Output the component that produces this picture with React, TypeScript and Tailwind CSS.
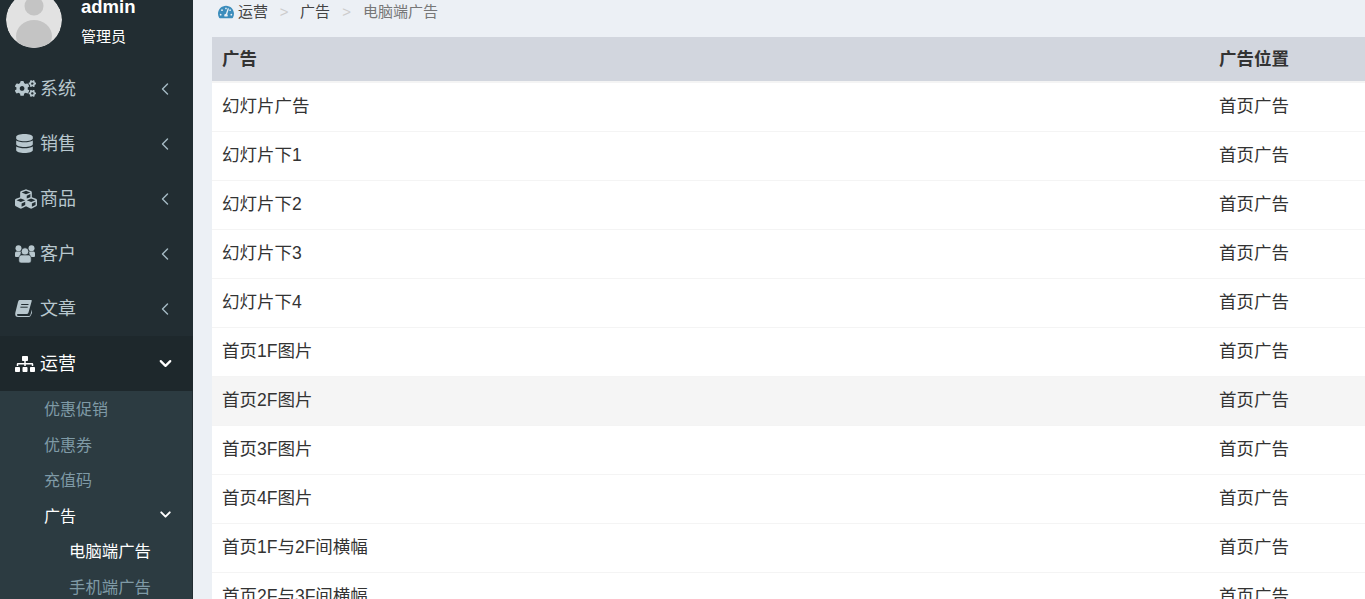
import { FaCogs, FaCubes, FaDatabase, FaSitemap, FaTachometerAlt } from 'react-icons/fa';
import { ChevronDown, ChevronLeft } from 'lucide-react';
import type { ReactNode } from 'react';

const font = "font-['Liberation_Sans','Noto_Sans_CJK_SC',sans-serif]";

const UsersIcon = () => (
  <svg viewBox="0 0 20 18" className="h-[18px] w-5" fill="currentColor">
    <circle cx="3.5" cy="3.2" r="3" />
    <circle cx="16.5" cy="3.2" r="3" />
    <path d="M0 8.5Q0 6 2 6.5H6L5 12H1Q0 12 0 11ZM20 8.5Q20 6 18 6.5H14L15 12H19Q20 12 20 11Z" />
    <circle cx="10" cy="6.5" r="3.8" stroke="#222d32" strokeWidth="0.8" />
    <path d="M3.8 13Q3.8 10 6.5 10H13.5Q16.2 10 16.2 13V16Q16.2 18 14 18H6Q3.8 18 3.8 16Z" stroke="#222d32" strokeWidth="0.6" />
  </svg>
);

const BookIcon = () => (
  <svg viewBox="0 0 17 17" className="h-[17px] w-[17px]">
    <path
      fill="currentColor"
      d="M4.5 0H16.5Q17 0.5 16.6 1.5L13.5 12.5Q13 14 11.5 14H3Q1.6 14 2 15.2Q2.3 16 3.5 16H14Q15 16 15.3 15L17 9.5V13L15.5 16Q15 17 13.5 17H3Q0 17 0.2 13.5Q0.3 12.5 1 10L3 2Q3.5 0 4.5 0Z"
    />
    <path stroke="#222d32" strokeWidth="1" d="M6.2 4.5H13.5M5.4 7.2H12.7" />
  </svg>
);

const menu: { label: string; icon: ReactNode; open?: boolean }[] = [
  { label: '系统', icon: <FaCogs size={21} /> },
  { label: '销售', icon: <FaDatabase size={19} /> },
  { label: '商品', icon: <FaCubes size={22} /> },
  { label: '客户', icon: <UsersIcon /> },
  { label: '文章', icon: <BookIcon /> },
  { label: '运营', icon: <FaSitemap size={20} />, open: true },
];

const rows = [
  '幻灯片广告',
  '幻灯片下1',
  '幻灯片下2',
  '幻灯片下3',
  '幻灯片下4',
  '首页1F图片',
  '首页2F图片',
  '首页3F图片',
  '首页4F图片',
  '首页1F与2F间横幅',
  '首页2F与3F间横幅',
];

const Avatar = () => (
  <svg viewBox="0 0 56 56" className="h-14 w-14 shrink-0 rounded-full">
    <circle cx="28" cy="28" r="28" fill="#e2e2e2" />
    <circle cx="28" cy="14" r="9.5" fill="#c4c4c4" />
    <ellipse cx="28" cy="44" rx="18" ry="16" fill="#c4c4c4" />
  </svg>
);

const Sidebar = () => (
  <aside className="h-full w-[193px] shrink-0 overflow-hidden bg-[#222d32]">
    <div className="flex h-[61px] flex-col">
      <div className="-mt-2 flex pl-[6px]">
        <Avatar />
        <div className="ml-[19px] pt-1 text-white">
          <div className="text-[18.5px] font-bold leading-[22px]">admin</div>
          <div className="mt-[9px] text-[15px] leading-[20px]">管理员</div>
        </div>
      </div>
    </div>

    {menu.map((item) => (
      <div
        key={item.label}
        className={`flex h-[55px] items-center pl-[15px] pr-[18px] ${item.open ? 'bg-[#1e282c] text-white' : 'text-[#b8c7ce]'}`}
      >
        <span className="flex w-[25px] shrink-0">{item.icon}</span>
        <span className="flex-1 text-lg leading-none">{item.label}</span>
        <span className="flex w-5 justify-center">
          {item.open ? <ChevronDown size={19} strokeWidth={2.8} /> : <ChevronLeft size={20} strokeWidth={1.7} className="text-[#a4b9c3]" />}
        </span>
      </div>
    ))}

    <div className="h-full border-r border-[#222d32] bg-[#2c3b41] text-base leading-[35.5px] text-[#7f9aa6]">
      <div className="pl-[44px] pt-px">优惠促销</div>
      <div className="pl-[44px]">优惠券</div>
      <div className="pl-[44px]">充值码</div>
      <div className="flex items-center pl-[44px] pr-[17px] text-white">
        <span className="flex-1">广告</span>
        <span className="flex w-5 justify-center">
          <ChevronDown size={17} strokeWidth={2.8} className="-mt-1" />
        </span>
      </div>
      <div className="pl-[69px] text-[16.4px] text-white">电脑端广告</div>
      <div className="pl-[69px] text-[16.4px]">手机端广告</div>
    </div>
  </aside>
);

const Breadcrumb = () => (
  <div className="flex h-[37px] items-start pl-[6px] pt-[2px] text-[15px] leading-5 text-[#444]">
    <FaTachometerAlt size={16} className="mr-1 mt-[2px] text-[#3c8dbc]" />
    <span>运营</span>
    <span className="w-[32px] text-center text-[#ccc]">&gt;</span>
    <span>广告</span>
    <span className="w-[33px] text-center text-[#ccc]">&gt;</span>
    <span className="text-[#777]">电脑端广告</span>
  </div>
);

const AdTable = () => (
  <div className="bg-white text-[17.5px] text-[#333]">
    <div className="flex h-[46px] items-center border-b-2 border-[#f4f4f4] bg-[#d2d6de] pt-px font-bold">
      <div className="flex-1 pl-[10px]">广告</div>
      <div className="w-[146px]">广告位置</div>
    </div>
    {rows.map((name, i) => (
      <div
        key={name}
        className={`flex h-[49px] items-center border-b border-[#f4f4f4] pb-[2px] ${i === 6 ? 'bg-[#f5f5f5]' : ''}`}
      >
        <div className="flex-1 pl-[10px]">{name}</div>
        <div className="w-[146px]">首页广告</div>
      </div>
    ))}
  </div>
);

export default function App() {
  return (
    <div className={`flex h-[599px] overflow-hidden bg-[#ecf0f5] ${font}`}>
      <Sidebar />
      <main className="min-w-0 flex-1 pl-[19px]">
        <Breadcrumb />
        <AdTable />
      </main>
    </div>
  );
}
